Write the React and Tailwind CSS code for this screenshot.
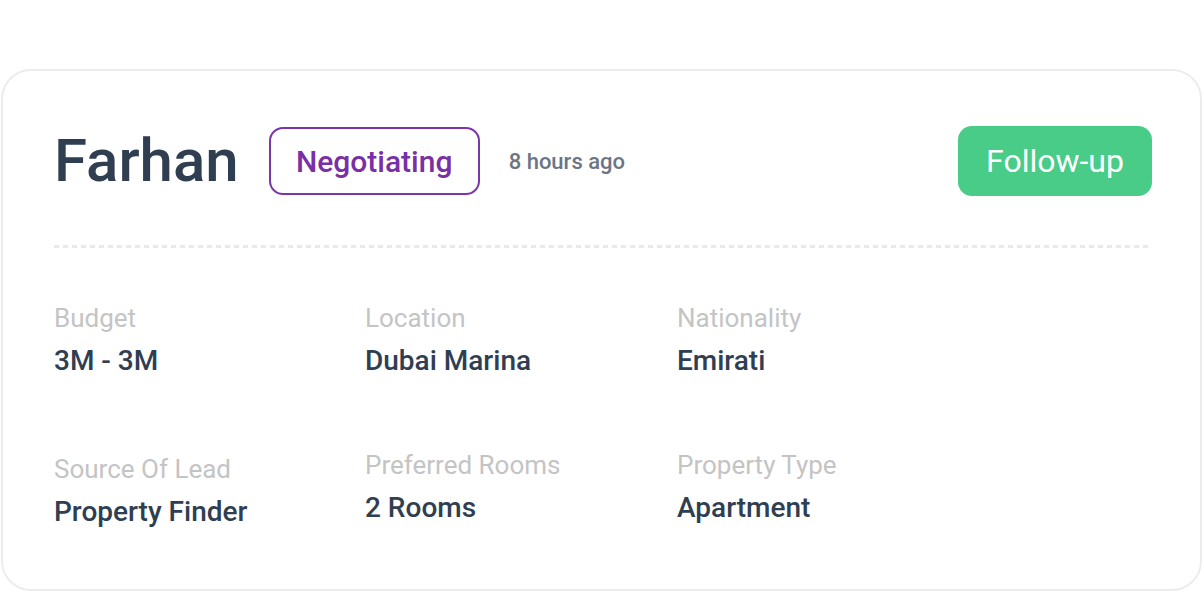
import React from 'react';

const fields = [
  { label: 'Budget', value: '3M - 3M' },
  { label: 'Location', value: 'Dubai Marina' },
  { label: 'Nationality', value: 'Emirati' },
  { label: 'Source Of Lead', value: 'Property Finder', shift: true },
  { label: 'Preferred Rooms', value: '2 Rooms' },
  { label: 'Property Type', value: 'Apartment' },
];

export default function App() {
  return (
    <div className="w-[1204px] h-[593px] bg-white font-['Roboto',sans-serif] pt-[69px] pl-px">
      {/* Lead card */}
      <div className="w-[1201px] h-[522px] rounded-[30px] border-2 border-[#ececec] pl-[51px] pr-[48px] pt-[55px]">
        <div className="flex items-center h-[70px]">
          <h1 className="text-[60px] font-medium leading-none text-[#2f3e51]">Farhan</h1>
          <span className="ml-[30px] w-[211px] h-[68px] flex items-center justify-center rounded-[14px] border-2 border-[#7d35aa] text-[30px] font-medium text-[#7a2fa6]">
            Negotiating
          </span>
          <span className="ml-[29px] text-[22px] font-medium text-[#6b7585]">8 hours ago</span>
          <button className="ml-auto w-[194px] h-[70px] rounded-[14px] bg-[#48cc88] text-white text-[32px] flex items-center justify-center">
            Follow-up
          </button>
        </div>

        <div className="mt-[49px] h-[3px] bg-[repeating-linear-gradient(90deg,#e9e9e9_0_5px,transparent_5px_9px)]" />

        <div className="grid grid-cols-[311px_312px_1fr] gap-y-[72px] mt-[54px]">
          {fields.map((f) => (
            <div key={f.label} className={f.shift ? 'pt-[4px] -mb-[4px]' : ''}>
              <p className="text-[26px] leading-[32px] text-[#c4c4c4]">{f.label}</p>
              <p className="mt-[11px] text-[28px] leading-[32px] font-medium text-[#2f3e51]">{f.value}</p>
            </div>
          ))}
        </div>
      </div>
    </div>
  );
}
